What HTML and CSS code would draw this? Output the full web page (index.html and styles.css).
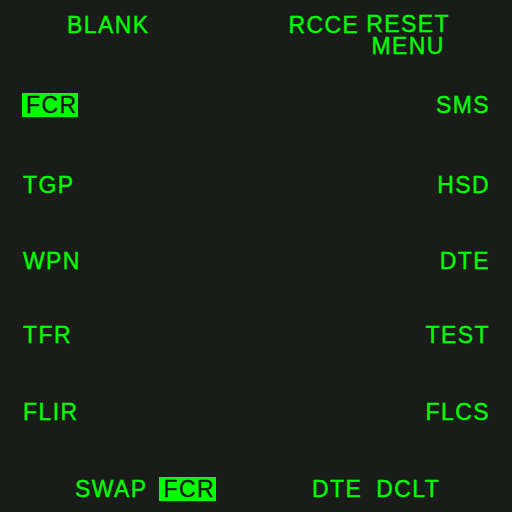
FILE: index.html
```html
<!DOCTYPE html>
<html>
<head>
<meta charset="utf-8">
<link rel="stylesheet" href="styles.css">
</head>
<body>
<div class="mfd">
  <div class="top">
    <span class="lbl blank">BLANK</span>
    <span class="lbl rcce">RCCE</span>
    <span class="lbl reset">RESET<br>MENU</span>
  </div>
  <div class="sides">
    <div class="col left">
      <span class="lbl"><span class="hl">FCR</span></span>
      <span class="lbl">TGP</span>
      <span class="lbl">WPN</span>
      <span class="lbl">TFR</span>
      <span class="lbl">FLIR</span>
    </div>
    <div class="col right">
      <span class="lbl">SMS</span>
      <span class="lbl">HSD</span>
      <span class="lbl">DTE</span>
      <span class="lbl">TEST</span>
      <span class="lbl">FLCS</span>
    </div>
  </div>
  <div class="bottom">
    <span class="lbl swap">SWAP</span>
    <span class="lbl"><span class="hl">FCR</span></span>
    <span class="lbl dte">DTE</span>
    <span class="lbl dclt">DCLT</span>
  </div>
</div>
</body>
</html>
```
FILE: styles.css
```css
html, body {
  margin: 0;
  padding: 0;
  background: #1a1c1a;
}
.mfd {
  width: 512px;
  height: 512px;
  box-sizing: border-box;
  display: flex;
  flex-direction: column;
  font-family: "Liberation Sans", Arial, sans-serif;
  font-size: 23px;
  line-height: 24px;
  letter-spacing: 1.4px;
  color: #00ff00;
  -webkit-text-stroke: 0.35px #00ff00;
}
.lbl {
  display: block;
  white-space: nowrap;
}
.top {
  display: flex;
  align-items: flex-start;
  height: 93px;
  padding-top: 13px;
  box-sizing: border-box;
}
.blank { margin-left: 67px; }
.rcce { margin-left: 139px; }
.reset {
  margin-left: 7px;
  text-align: center;
  line-height: 22px;
}
.sides {
  display: flex;
  justify-content: space-between;
  padding: 0 22px 0 22px;
}
.col {
  display: grid;
  grid-template-rows: 80px 76px 74px 77px 24px;
  align-items: start;
}
.left .lbl { padding-left: 1px; }
.left .lbl:first-child { padding-left: 0; }
.right { justify-items: end; }
.hl {
  display: inline-block;
  background: #00ff00;
  color: #141414;
  -webkit-text-stroke: 0.35px #141414;
  padding: 0 1px 0 4px;
}
.bottom {
  display: flex;
  margin-top: 53px;
}
.swap { margin-left: 75px; margin-right: 12px; }
.dte { margin-left: 96px; }
.dclt { margin-left: 14px; }
```
